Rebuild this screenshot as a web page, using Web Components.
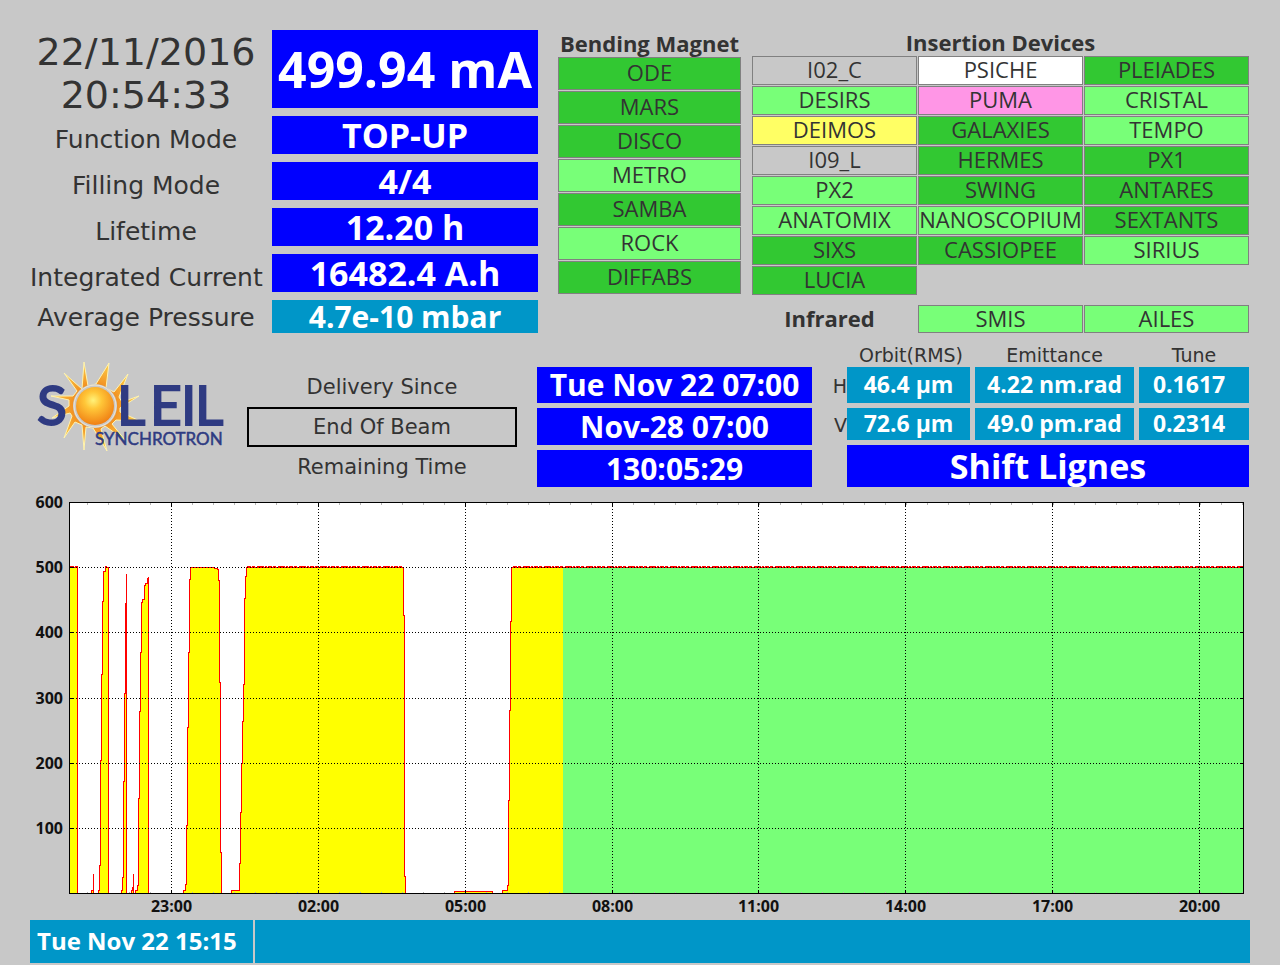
<!DOCTYPE html>
<html lang="en">
<head>
<meta charset="utf-8">
<meta name="viewport" content="width=device-width, initial-scale=1">
<title>SOLEIL machine status</title>
<style>
    body {
        margin: 0;
        background: #c8c8c8;
        color: #333;
        font-family: "Open Sans", "Noto Sans", sans-serif;
    }
</style>
</head>
<body>
<machine-status>
    <beam-readings slot="readings"></beam-readings>
    <device-group slot="bending" heading="Bending Magnet" columns="1" row="33"
        devices="ODE:beam MARS:beam DISCO:beam METRO:open SAMBA:beam ROCK:open DIFFABS:beam"></device-group>
    <device-group slot="insertion" heading="Insertion Devices" columns="3" row="29"
        devices="I02_C:none PSICHE:off PLEIADES:beam DESIRS:open PUMA:fault CRISTAL:open DEIMOS:wait GALAXIES:beam TEMPO:open I09_L:none HERMES:beam PX1:beam PX2:open SWING:beam ANTARES:beam ANATOMIX:open NANOSCOPIUM:open SEXTANTS:beam SIXS:beam CASSIOPEE:beam SIRIUS:open LUCIA:beam"></device-group>
    <infrared-group slot="insertion">
        <device-tile state="open">SMIS</device-tile>
        <device-tile state="open">AILES</device-tile>
    </infrared-group>
    <soleil-logo slot="delivery"></soleil-logo>
    <delivery-info slot="delivery"></delivery-info>
    <beam-quality slot="delivery">Shift Lignes</beam-quality>
    <current-chart slot="chart"></current-chart>
    <message-bar slot="message"><time slot="time">Tue Nov 22 15:15</time></message-bar>
</machine-status>

<script>
class MachineStatus extends HTMLElement {
    connectedCallback() {
        this.attachShadow({ mode: 'open' });
        this.shadowRoot.innerHTML = `
            <style>
                :host {
                    display: block;
                    padding: 30px 30px 2px;
                }

                .top {
                    display: grid;
                    grid-template-columns: 508fr 192fr 497fr;
                    column-gap: 11px;
                    padding-right: 1px;
                }

                .bending {
                    padding: 1px 0 0 9px;
                }

                .insertion {
                    display: flex;
                    flex-direction: column;
                    justify-content: space-between;
                }

                .delivery {
                    display: grid;
                    grid-template-columns: 207fr 565fr 427fr;
                    column-gap: 10px;
                    padding: 10px 1px 0 0;
                    align-items: end;
                }
            </style>
            <div class="top">
                <slot name="readings"></slot>
                <div class="bending"><slot name="bending"></slot></div>
                <div class="insertion"><slot name="insertion"></slot></div>
            </div>
            <div class="delivery"><slot name="delivery"></slot></div>
            <slot name="chart"></slot>
            <slot name="message"></slot>
        `;
    }
}

// Coloured box with one centred reading
class ValueBox extends HTMLElement {
    connectedCallback() {
        this.attachShadow({ mode: 'open' });
        this.shadowRoot.innerHTML = `
            <style>
                :host {
                    display: flex;
                    align-items: center;
                    justify-content: center;
                    height: 38px;
                    background: #00f;
                    color: #fff;
                    font-size: 34px;
                    font-weight: 700;
                    line-height: 1;
                    white-space: nowrap;
                }
            </style>
            <slot></slot>
        `;
    }
}

class BeamReadings extends HTMLElement {
    connectedCallback() {
        this.attachShadow({ mode: 'open' });
        this.shadowRoot.innerHTML = `
            <style>
                :host {
                    display: grid;
                    grid-template-columns: minmax(0, 232fr) minmax(0, 266fr);
                    column-gap: 10px;
                    align-items: start;
                    height: 303px;
                }

                .labels {
                    padding-top: 1px;
                    font: 25px/46px "DejaVu Sans", sans-serif;
                    text-align: center;
                    white-space: nowrap;
                }

                .clock {
                    font-size: 38px;
                    line-height: 43px;
                }

                .labels .last {
                    line-height: 33px;
                }

                .values {
                    display: flex;
                    flex-direction: column;
                    gap: 8px;
                }

                .current {
                    height: 78px;
                    font-size: 50px;
                }

                .pressure {
                    height: 33px;
                    font-size: 30px;
                    background: #0096c8;
                }
            </style>
            <div class="labels">
                <div class="clock">22/11/2016</div>
                <div class="clock">20:54:33</div>
                <div>Function Mode</div>
                <div>Filling Mode</div>
                <div>Lifetime</div>
                <div>Integrated Current</div>
                <div class="last">Average Pressure</div>
            </div>
            <div class="values">
                <value-box class="current">499.94 mA</value-box>
                <value-box>TOP-UP</value-box>
                <value-box>4/4</value-box>
                <value-box>12.20 h</value-box>
                <value-box>16482.4 A.h</value-box>
                <value-box class="pressure">4.7e-10 mbar</value-box>
            </div>
        `;
    }
}

class DeviceTile extends HTMLElement {
    connectedCallback() {
        this.attachShadow({ mode: 'open' });
        this.shadowRoot.innerHTML = `
            <style>
                :host {
                    display: flex;
                    align-items: center;
                    justify-content: center;
                    box-sizing: border-box;
                    min-width: 0;
                    padding-bottom: 3px;
                    border: 1px solid #808080;
                    font-size: 22px;
                    line-height: 1;
                    white-space: nowrap;
                }

                :host([state="beam"]) { background: #32c832; }
                :host([state="open"]) { background: #78ff78; }
                :host([state="wait"]) { background: #ffff64; }
                :host([state="fault"]) { background: #ff96e6; }
                :host([state="off"]) { background: #fff; }
            </style>
            <slot></slot>
        `;
    }
}

class DeviceGroup extends HTMLElement {
    connectedCallback() {
        const tiles = this.getAttribute('devices').split(' ').map(item => {
            const [name, state] = item.split(':');
            return `<device-tile state="${state}">${name}</device-tile>`;
        }).join('');

        this.attachShadow({ mode: 'open' });
        this.shadowRoot.innerHTML = `
            <style>
                :host {
                    display: block;
                }

                h2 {
                    margin: 0 0 2px;
                    font-size: 22px;
                    font-weight: 700;
                    line-height: 24px;
                    text-align: center;
                    white-space: nowrap;
                }

                .tiles {
                    display: grid;
                    grid-template-columns: repeat(${this.getAttribute('columns')}, minmax(0, 1fr));
                    grid-auto-rows: ${this.getAttribute('row')}px;
                    gap: 1px;
                }
            </style>
            <h2>${this.getAttribute('heading')}</h2>
            <div class="tiles">${tiles}</div>
        `;
    }
}

class InfraredGroup extends HTMLElement {
    connectedCallback() {
        this.attachShadow({ mode: 'open' });
        this.shadowRoot.innerHTML = `
            <style>
                :host {
                    display: grid;
                    grid-template-columns: repeat(3, minmax(0, 1fr));
                    grid-auto-rows: 28px;
                    gap: 1px;
                }

                h2 {
                    margin: 0;
                    padding-right: 10px;
                    font-size: 22px;
                    font-weight: 700;
                    line-height: 26px;
                    text-align: center;
                }
            </style>
            <h2>Infrared</h2>
            <slot></slot>
        `;
    }
}

class SoleilLogo extends HTMLElement {
    connectedCallback() {
        this.attachShadow({ mode: 'open' });
        this.shadowRoot.innerHTML = `
            <style>
                :host {
                    display: block;
                    align-self: start;
                    padding-top: 7px;
                }

                svg {
                    display: block;
                    width: 100%;
                }

                text {
                    font-family: Lato, sans-serif;
                    fill: #2f3b82;
                    stroke: #2f3b82;
                }
            </style>
            <svg viewBox="30 350 207 112" role="img" aria-label="SOLEIL Synchrotron">
                <defs>
                    <radialGradient id="ball" cx="45%" cy="35%" r="65%">
                        <stop offset="0" stop-color="#fff27a"/>
                        <stop offset="0.35" stop-color="#ffc638"/>
                        <stop offset="1" stop-color="#f08014"/>
                    </radialGradient>
                    <radialGradient id="ray" gradientUnits="userSpaceOnUse" cx="95" cy="406" r="48">
                        <stop offset="0.4" stop-color="#f08a1e"/>
                        <stop offset="1" stop-color="#ffd84c"/>
                    </radialGradient>
                </defs>
                <path fill="url(#ray)" stroke="#fff3b0" stroke-linejoin="round" d="M84 362 88 386 96 384 109 363 106 388 114 392 128 374 119 397 122 402 139 396 120 408 120 412 140 421 116 420 112 424 125 440 105 426 101 429 107 451 93 428 86 427 84 450 82 425 75 422 64 438 72 416 70 413 52 418 69 406 69 400 51 396 73 396 77 391 64 373 82 389z"/>
                <circle cx="95" cy="406" r="22" fill="#c8c8c8"/>
                <circle cx="95" cy="406" r="21" fill="none" stroke="#eee6d4"/>
                <circle cx="95" cy="406" r="19" fill="url(#ball)"/>
                <text y="425" font-size="55" stroke-width="2" x="37 117 150 181 195">SLEIL</text>
                <text x="95" y="445" font-size="17" stroke-width="0.5">SYNCHROTRON</text>
            </svg>
        `;
    }
}

class DeliveryInfo extends HTMLElement {
    connectedCallback() {
        this.attachShadow({ mode: 'open' });
        this.shadowRoot.innerHTML = `
            <style>
                :host {
                    display: grid;
                    grid-template-columns: 270fr 275fr;
                    column-gap: 20px;
                }

                .labels {
                    display: grid;
                    grid-auto-rows: 40px;
                    font: 21px/40px "DejaVu Sans", sans-serif;
                    text-align: center;
                    white-space: nowrap;
                }

                .framed {
                    border: 2px solid #000;
                    line-height: 36px;
                }

                .values {
                    display: grid;
                    grid-template-rows: 36px 37px 37px;
                    gap: 5px;
                }

                value-box {
                    height: auto;
                    font-size: 30px;
                }
            </style>
            <div class="labels">
                <div>Delivery Since</div>
                <div class="framed">End Of Beam</div>
                <div>Remaining Time</div>
            </div>
            <div class="values">
                <value-box>Tue Nov 22 07:00</value-box>
                <value-box>Nov-28 07:00</value-box>
                <value-box>130:05:29</value-box>
            </div>
        `;
    }
}

class BeamQuality extends HTMLElement {
    connectedCallback() {
        this.attachShadow({ mode: 'open' });
        this.shadowRoot.innerHTML = `
            <style>
                :host {
                    display: block;
                    padding-left: 10px;
                }

                table {
                    width: 100%;
                    table-layout: fixed;
                    border-collapse: separate;
                    border-spacing: 0;
                }

                th {
                    padding: 0;
                    font: 19px/24px "DejaVu Sans", sans-serif;
                }

                th[scope="col"] {
                    padding-left: 5px;
                }

                th[scope="row"] {
                    padding-bottom: 4px;
                    text-align: right;
                }

                td {
                    padding: 0 0 2px;
                    border: 0 solid #c8c8c8;
                    border-width: 0 0 5px 5px;
                    background: #0096c8;
                    color: #fff;
                    font-size: 23px;
                    font-weight: 700;
                    line-height: 30px;
                    text-align: center;
                    white-space: nowrap;
                }

                .horizontal td {
                    line-height: 34px;
                }

                td:nth-child(2) {
                    border-left: 0;
                }

                td:last-child {
                    padding-right: 10px;
                }

                value-box {
                    height: 42px;
                    margin-left: 15px;
                }
            </style>
            <table>
                <colgroup>
                    <col style="width: 15px"><col style="width: 30%"><col style="width: 40%"><col style="width: 28%">
                </colgroup>
                <thead>
                    <tr><th></th><th scope="col">Orbit(RMS)</th><th scope="col">Emittance</th><th scope="col">Tune</th></tr>
                </thead>
                <tbody>
                    <tr class="horizontal"><th scope="row">H</th><td>46.4 µm</td><td>4.22 nm.rad</td><td>0.1617</td></tr>
                    <tr><th scope="row">V</th><td>72.6 µm</td><td>49.0 pm.rad</td><td>0.2314</td></tr>
                </tbody>
            </table>
            <value-box><slot></slot></value-box>
        `;
    }
}

class CurrentChart extends HTMLElement {
    connectedCallback() {
        const left = 69.5, right = 1243.5, top = 502.5, bottom = 893.5;
        const hours = ['23:00', '02:00', '05:00', '08:00', '11:00', '14:00', '17:00', '20:00'];

        // stored beam current, one run per fill
        const runs = [
            'M69.5 893.5V566.5H73V567.5H75V566.5H77.5V893.5',
            'M91.5 893.5V890.5H93.5V873.5V893.5',
            'M98.5 893.5V890.5H99.5V865.5H100.5V760.5H101.5V674.5H102.5V601.5H103.5V571.5H105.5V566.5H106.5V567.5H108.5V893.5',
            'M121.5 893.5V890.5H122.5V877.5H123.5V781.5H124.5V693.5H125.5V603.5H126.5V573.5V893.5',
            'M131.5 893.5V890.5H132.5V887.5H133.5V873.5V893.5',
            'M135.5 893.5V890.5H137.5V885.5H138.5V798.5H139.5V711.5H140.5V652.5H141.5V602.5H142.5V599.5H144.5V585.5H145.5V583.5H147.5V578.5H148.5V576.5V893.5',
            'M183.5 893.5V890.5H185.5V884.5H186.5V825.5H187.5V727.5H188.5V652.5H189.5V579.5H190.5V567.5H214.5V568.5H217.5V569.5H218.5V580.5H219.5V682.5H220.5V852.5H221.5V893.5',
            'M231.5 893.5V890.5H239.5V863.5H240.5V812.5H241.5V763.5H242.5V721.5H243.5V684.5H244.5V598.5H245.5V576.5H246.5V567.5H403.5V615.5H404.5V876.5H405.5V893.5',
            'M454.5 893.5V891.5H492.5V893.5',
            'M502.5 893.5V890.5H507.5V885.5H508.5V800.5H509.5V710.5H510.5V621.5H511.5V567.5H1243.5'
        ];

        let grid = '', marks = '', minor = '', labels = '';
        hours.forEach((hour, i) => {
            const x = Math.round(171 + i * 146.85) + 0.5;
            grid += `M${x} 503V893`;
            marks += `M${x} ${top}v4M${x} ${bottom}v-4`;
            labels += `<text x="${x}" y="912" text-anchor="middle">${hour}</text>`;
        });
        for (let value = 100; value <= 600; value += 100) {
            const y = Math.round(893 - value * 0.6515) + 0.5;
            if (value < 600) {
                grid += `M70 ${y}H1243`;
                marks += `M${left} ${y}h4M${right} ${y}h-4`;
            }
            labels += `<text x="63" y="${y + 5}" text-anchor="end">${value}</text>`;
        }
        for (let x = 87.5; x < right; x += 21) {
            minor += `M${x} ${top}v2M${x} ${bottom}v-2`;
        }

        this.attachShadow({ mode: 'open' });
        this.shadowRoot.innerHTML = `
            <style>
                :host {
                    display: block;
                }

                svg {
                    display: block;
                    width: 100%;
                }

                path, rect {
                    fill: none;
                    shape-rendering: crispEdges;
                }

                .paper { fill: #fff; }
                .fill { fill: #ff0; }
                .user-beam { fill: #78ff78; }
                .trace { stroke: #f00; }
                .ripple { stroke: #f00; stroke-dasharray: 4 1 3 2 7 1 2 1; }
                .grid { stroke: #000; stroke-dasharray: 1 2; shape-rendering: auto; }
                .minor { stroke: #b4b4b4; }
                .frame { stroke: #000; }

                text {
                    font-size: 16px;
                    font-weight: 700;
                    fill: #111;
                }
            </style>
            <svg viewBox="30 487 1220 433" role="img" aria-label="Stored current over the last 24 hours, in mA">
                <rect class="paper" x="69.5" y="502.5" width="1174" height="391"/>
                <path class="fill" d="${runs.join('')}V893.5H502.5"/>
                <path class="user-beam" d="M563 568H1243V893H563z"/>
                <path class="minor" d="${minor}"/>
                <path class="trace" d="${runs.join('')}"/>
                <path class="ripple" d="M247 566.5H403M513 566.5H1243"/>
                <path class="grid" d="${grid}"/>
                <path class="frame" d="M69.5 502.5H1243.5V893.5H69.5z${marks}"/>
                ${labels}
            </svg>
        `;
    }
}

class MessageBar extends HTMLElement {
    connectedCallback() {
        this.attachShadow({ mode: 'open' });
        this.shadowRoot.innerHTML = `
            <style>
                :host {
                    display: grid;
                    grid-template-columns: 223fr 995fr;
                    gap: 2px;
                    color: #fff;
                    font-size: 24px;
                    font-weight: 700;
                    line-height: 41px;
                    white-space: nowrap;
                }

                div {
                    height: 43px;
                    padding-left: 7px;
                    box-sizing: border-box;
                    background: #0096c8;
                }
            </style>
            <div><slot name="time"></slot></div>
            <div><slot></slot></div>
        `;
    }
}

customElements.define('machine-status', MachineStatus);
customElements.define('value-box', ValueBox);
customElements.define('beam-readings', BeamReadings);
customElements.define('device-tile', DeviceTile);
customElements.define('device-group', DeviceGroup);
customElements.define('infrared-group', InfraredGroup);
customElements.define('soleil-logo', SoleilLogo);
customElements.define('delivery-info', DeliveryInfo);
customElements.define('beam-quality', BeamQuality);
customElements.define('current-chart', CurrentChart);
customElements.define('message-bar', MessageBar);
</script>
</body>
</html>
